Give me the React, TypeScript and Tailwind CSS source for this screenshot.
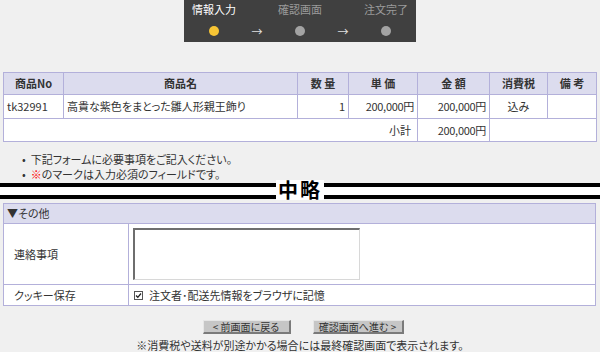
import React from 'react';

const jp = "font-['Noto_Sans_CJK_JP','Liberation_Sans',sans-serif] [font-feature-settings:'palt']";

const steps = [
  { label: '情報入力', active: true },
  { label: '確認画面', active: false },
  { label: '注文完了', active: false },
];

function Stepper() {
  return (
    <div className="mx-auto w-[232px] h-[42px] bg-[#404040] px-[8px] grid grid-cols-[44px_42px_44px_42px_44px] grid-rows-[22px_20px] items-center">
      {steps.map((s, i) => (
        <span
          key={s.label}
          className={`text-[11px] leading-[14px] text-center whitespace-nowrap -mt-[4px] ${s.active ? 'text-white' : 'text-[#9a9a9a]'}`}
          style={{ gridColumn: i * 2 + 1, gridRow: 1 }}
        >
          {s.label}
        </span>
      ))}
      {steps.map((s, i) => (
        <div key={'d' + s.label} className="flex justify-center" style={{ gridColumn: i * 2 + 1, gridRow: 2 }}>
          <span className={`block w-[10px] h-[10px] rounded-full -mt-[2px] ${s.active ? 'bg-[#f7c535]' : 'bg-[#a3a3a3]'}`} />
        </div>
      ))}
      {[2, 4].map((c) => (
        <span key={c} className="text-[11px] leading-[14px] text-center text-[#e0e0e0] -mt-[2px]" style={{ gridColumn: c, gridRow: 2 }}>
          →
        </span>
      ))}
    </div>
  );
}

function OrderTable() {
  const th = 'border border-[#b3b0da] bg-[#dcdcee] font-bold text-[11px] text-[#333] text-center p-0';
  const td = 'border border-[#b3b0da] bg-white text-[11px] text-[#333] px-[3px] p-0';
  return (
    <table className="ml-[3px] w-[593px] border-collapse table-fixed">
      <colgroup>
        <col className="w-[60px]" />
        <col className="w-[234px]" />
        <col className="w-[51px]" />
        <col className="w-[69px]" />
        <col className="w-[72px]" />
        <col className="w-[58px]" />
        <col className="w-[49px]" />
      </colgroup>
      <thead>
        <tr className="h-[22px]">
          <th className={th}>商品No</th>
          <th className={th}>商品名</th>
          <th className={th}>数 量</th>
          <th className={th}>単 価</th>
          <th className={th}>金 額</th>
          <th className={th}>消費税</th>
          <th className={th}>備 考</th>
        </tr>
      </thead>
      <tbody>
        <tr className="h-[24px]">
          <td className={`${td} text-left text-[10px]`}>tk32991</td>
          <td className={`${td} text-left`}>高貴な紫色をまとった雛人形親王飾り</td>
          <td className={`${td} text-right`}>1</td>
          <td className={`${td} text-right tracking-[-0.3px]`}>200,000円</td>
          <td className={`${td} text-right tracking-[-0.3px]`}>200,000円</td>
          <td className={`${td} text-center`}>込み</td>
          <td className={td}></td>
        </tr>
        <tr className="h-[23px]">
          <td colSpan={4} className={`${td} text-right !pr-[6px]`}>小計</td>
          <td className={`${td} text-right tracking-[-0.3px]`}>200,000円</td>
          <td colSpan={2} className={td}></td>
        </tr>
      </tbody>
    </table>
  );
}

function Divider() {
  return (
    <div className="-mt-[2px] flex items-start h-[20px]">
      <div className="flex-1 mt-[3px] h-[16px] bg-white border-t-4 border-b-4 border-black" />
      <span className="h-[20px] leading-[20px] bg-white text-[20px] font-semibold text-black px-[2px] tracking-[2px]">中略</span>
      <div className="flex-1 mt-[3px] h-[16px] bg-white border-t-4 border-b-4 border-black" />
    </div>
  );
}

function OtherSection() {
  const td = 'border border-[#b3b0da] bg-white text-[11px] text-[#333] p-0';
  return (
    <table className="mt-[3px] ml-[3px] w-[593px] border-collapse table-fixed">
      <colgroup>
        <col className="w-[125px]" />
        <col />
      </colgroup>
      <tbody>
        <tr className="h-[20px]">
          <td colSpan={2} className="border border-[#b3b0da] bg-[#dcdcee] text-[11px] text-[#333] pl-[3px] p-0">▼その他</td>
        </tr>
        <tr className="h-[61px]">
          <td className={`${td} pl-[10px]`}>連絡事項</td>
          <td className={`${td} pl-[4px]`}>
            <div className="w-[227px] h-[52px] bg-white border-t-2 border-l-2 border-t-[#6e6e6e] border-l-[#6e6e6e] border-b border-r border-b-[#d8d8d8] border-r-[#d8d8d8]" />
          </td>
        </tr>
        <tr className="h-[21px]">
          <td className={`${td} pl-[10px]`}>クッキー保存</td>
          <td className={`${td} pl-[5px]`}>
            <div className="flex items-center gap-[6px]">
              <span className="w-[9px] h-[9px] border border-[#555] bg-white flex items-center justify-center">
                <svg width="7" height="7" viewBox="0 0 7 7">
                  <path d="M1 3.5 L2.8 5.3 L6 1.5" fill="none" stroke="#222" strokeWidth="1.3" />
                </svg>
              </span>
              <span>注文者･配送先情報をブラウザに記憶</span>
            </div>
          </td>
        </tr>
      </tbody>
    </table>
  );
}

export default function App() {
  return (
    <main className={`w-[600px] h-[352px] overflow-hidden bg-[#f0f0f0] ${jp}`}>
      <Stepper />
      <div className="mt-[30px]">
        <OrderTable />
      </div>
      <ul className="mt-[10px] pl-[22px] text-[11px] leading-[15px] text-[#333]">
        <li className="flex gap-[5px]"><span>•</span><span>下記フォームに必要事項をご記入ください。</span></li>
        <li className="flex gap-[5px]"><span>•</span><span><span className="text-[#f00]">※</span>のマークは入力必須のフィールドです。</span></li>
      </ul>
      <Divider />
      <OtherSection />
      <div className="mt-[14px] flex justify-center gap-[22px] pl-[6px]">
        <button className="w-[88px] h-[14px] bg-[#c6c6c6] border-t border-l border-t-[#e6e6e6] border-l-[#e6e6e6] border-b-2 border-r-2 border-b-[#7a7a7a] border-r-[#7a7a7a] text-[10px] leading-[11px] text-[#333]">
          &lt; 前画面に戻る
        </button>
        <button className="w-[91px] h-[14px] bg-[#c6c6c6] border-t border-l border-t-[#e6e6e6] border-l-[#e6e6e6] border-b-2 border-r-2 border-b-[#7a7a7a] border-r-[#7a7a7a] text-[10px] leading-[11px] text-[#333]">
          確認画面へ進む &gt;
        </button>
      </div>
      <p className="mt-[5px] text-center text-[11px] leading-[13px] text-[#333]">
        ※消費税や送料が別途かかる場合には最終確認画面で表示されます。
      </p>
    </main>
  );
}
